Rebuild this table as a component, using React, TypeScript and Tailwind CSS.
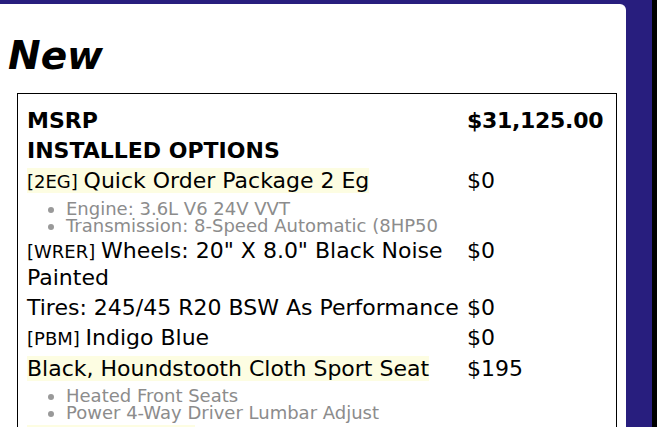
import React from 'react';

type Option = {
  code?: string;
  name: string;
  price: string;
  highlight?: boolean;
  details?: string[];
};

const options: Option[] = [
  {
    code: '2EG',
    name: 'Quick Order Package 2 Eg',
    price: '$0',
    highlight: true,
    details: ['Engine: 3.6L V6 24V VVT', 'Transmission: 8-Speed Automatic (8HP50'],
  },
  { code: 'WRER', name: 'Wheels: 20" X 8.0" Black Noise Painted', price: '$0' },
  { name: 'Tires: 245/45 R20 BSW As Performance', price: '$0' },
  { code: 'PBM', name: 'Indigo Blue', price: '$0' },
  {
    name: 'Black, Houndstooth Cloth Sport Seat',
    price: '$195',
    highlight: true,
    details: ['Heated Front Seats', 'Power 4-Way Driver Lumbar Adjust'],
  },
  { code: 'AJK', name: 'Plus Group', price: '$1,995', highlight: true },
];

function OptionRow({ option }: { option: Option }) {
  return (
    <>
      <div className="py-[2px]">
        <span className={option.highlight ? 'bg-[#fdfde2]' : ''}>
          {option.code && <span className="text-[18px]">[{option.code}] </span>}
          {option.name}
        </span>
        {option.details && (
          <ul className="mt-[5px] pl-[39px] list-disc text-[18px] leading-[17px] text-[#8c8c8c] marker:text-[#999]">
            {option.details.map((d) => (
              <li key={d} className="whitespace-nowrap">{d}</li>
            ))}
          </ul>
        )}
      </div>
      <div className="py-[2px]">{option.price}</div>
    </>
  );
}

export default function App() {
  return (
    <div className="h-[427px] overflow-hidden bg-[#281e7e] border-r-[5px] border-black pt-[4px] pr-[26px]">
      <div className="h-full bg-white rounded-tr-[6px]">
        <h1 className="pt-[29px] pl-[8px] font-['DejaVu_Sans',sans-serif] text-[39px] font-bold italic leading-[46px] text-black">
          New
        </h1>
        <div className="mt-[14px] ml-[17px] w-[600px] border border-black pt-[12px] pl-[9px] pr-[10px] font-['DejaVu_Sans',sans-serif] text-[22px] leading-[26px] text-black">
          <div className="grid grid-cols-[435px_1fr] gap-x-[5px]">
            <div className="py-[2px] font-bold">MSRP</div>
            <div className="py-[2px] font-bold tracking-[-0.3px]">$31,125.00</div>
            <div className="py-[2px] font-bold col-span-2">INSTALLED OPTIONS</div>
            {options.map((o) => (
              <OptionRow key={o.name} option={o} />
            ))}
          </div>
        </div>
      </div>
    </div>
  );
}
